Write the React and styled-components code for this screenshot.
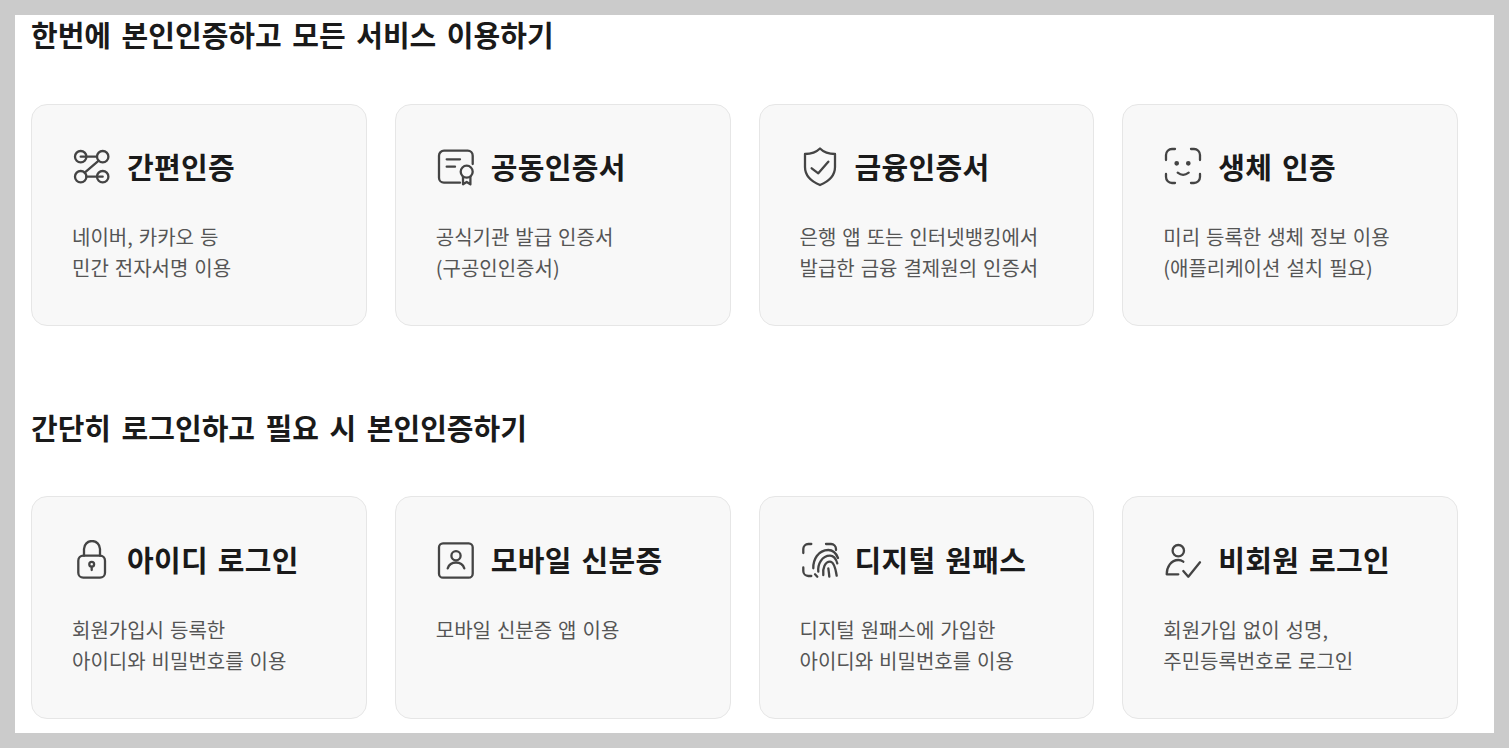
import React from 'react';
import styled, { createGlobalStyle } from 'styled-components';

const Global = createGlobalStyle`
  html, body { margin: 0; padding: 0; background: #cbcbcb; }
  body { font-family: "Noto Sans CJK KR", "Noto Sans", sans-serif; }
`

const Frame = styled.div`
  width: 1509px;
  height: 748px;
  box-sizing: border-box;
  padding: 15px;
`

const Panel = styled.main`
  height: 718px;
  box-sizing: border-box;
  background: #fff;
  padding: 0 36px 0 16px;
`

const Section = styled.section`
  & + & { margin-top: 81.9px; }
`

const Heading = styled.h2`
  margin: 0 0 46.6px;
  height: 42px;
  line-height: 38px;
  font-size: 29px;
  font-weight: 700;
  word-spacing: 4px;
  color: #1a1a1a;
`

const Cards = styled.div`
  display: grid;
  grid-template-columns: repeat(4, 1fr);
  column-gap: 28px;
`

const Card = styled.article`
  height: 222.3px;
  box-sizing: border-box;
  padding: 41.4px 40px 0;
  background: #f8f8f8;
  border: 1px solid #e6e6e6;
  border-radius: 16px;
`

const CardHead = styled.div`
  display: flex;
  align-items: center;
  gap: 15px;
  height: 42px;
`

const Icon = styled.svg`
  width: 40px;
  height: 40px;
  flex: none;
  fill: none;
  stroke: #444;
  stroke-width: 2.3;
  stroke-linecap: round;
  stroke-linejoin: round;
`

const CardTitle = styled.h3`
  margin: 0;
  padding-bottom: 2px;
  font-size: 29px;
  line-height: 40px;
  font-weight: 700;
  letter-spacing: 0.3px;
  word-spacing: 3px;
  color: #1a1a1a;
`

const Desc = styled.p`
  margin: 32.75px 0 0;
  font-size: 20px;
  line-height: 31.5px;
  word-spacing: 1.5px;
  color: #555;
  white-space: pre-line;
`

const icons = {
  flow: (
    <>
      <circle cx="8.7" cy="9.7" r="5.7" />
      <circle cx="30.7" cy="9.7" r="5.7" />
      <circle cx="8.7" cy="29.7" r="5.7" />
      <circle cx="30.7" cy="29.7" r="5.7" />
      <path d="M8.7 9.7H25M26.7 13.7L12.7 25.7M14.4 29.7H30.7" />
    </>
  ),
  cert: (
    <>
      <path d="M24 35.7H8a5 5 0 0 1-5-5V8.7a5 5 0 0 1 5-5h23.7a5 5 0 0 1 5 5V17" />
      <path d="M10.7 12.3H24M10.7 19.7H19" />
      <circle cx="30.7" cy="24.7" r="6" />
      <path d="M27 30v7.3l3.7-2.3 3.7 2.3V30" />
    </>
  ),
  shield: (
    <path d="M20 1.5C23.5 5 29 7 35 7V20C35 29 28.5 34.5 20 38C11.5 34.5 5 29 5 20V7C11 7 16.5 5 20 1.5ZM11.7 21.3L18.3 26.3L28.3 14.7" />
  ),
  face: (
    <>
      <path d="M3 13V8a6 6 0 0 1 6-6h3M28 2h3a6 6 0 0 1 6 6v5M3 27v3a6 6 0 0 0 6 6h3M37 27v3a6 6 0 0 1-6 6h-3" />
      <path d="M14.7 25.7Q20 30 25.7 25.7" />
      <circle cx="13.7" cy="16.3" r="1.2" fill="#444" />
      <circle cx="25.3" cy="16.3" r="1.2" fill="#444" />
    </>
  ),
  lock: (
    <>
      <rect x="6.3" y="15.7" width="26.7" height="22" rx="5" />
      <path d="M12 15.7V9a8 8 0 0 1 16 0v6.7" />
      <circle cx="19.7" cy="24.3" r="2.4" />
      <path d="M19.7 27V30" />
    </>
  ),
  idcard: (
    <>
      <rect x="3" y="3.3" width="33.7" height="34.4" rx="4" />
      <circle cx="20" cy="15.7" r="4.6" />
      <path d="M11.7 28.3C13 24.5 16 22.5 20 22.5S27 24.5 28.3 28.3" />
    </>
  ),
  fingerprint: (
    <>
      <path d="M3.3 13V9a5 5 0 0 1 5-5h3M3.3 27.5V31a5 5 0 0 0 5 5h3M26 4h5a5 5 0 0 1 5 5v1" />
      <path d="M13.3 28.3C13 20 18 10 28.3 10C32.5 10 36 13 38 18" />
      <path d="M15 34.3L17.3 36.7M18.3 31.7C17.5 24 22 15.7 30 15.7C33.5 15.7 36 19 37.3 23.3" />
      <path d="M23.3 35C22.5 28 25 21.7 30 21.7C33 21.7 35 25 36.7 35.7" />
      <path d="M29.3 36.7C29 33 28.7 31 28.3 28.3" />
    </>
  ),
  person: (
    <>
      <circle cx="15.3" cy="10.7" r="5.7" />
      <path d="M15.3 34.3H3.7C3.7 27 8 20 15.3 20C17 20 18.7 20.5 20.3 21.7" />
      <path d="M20.3 31L25.3 36.7L37 22.3" />
    </>
  ),
}

const sections = [
  {
    title: '한번에 본인인증하고 모든 서비스 이용하기',
    cards: [
      { icon: 'flow', name: '간편인증', desc: '네이버, 카카오 등\n민간 전자서명 이용' },
      { icon: 'cert', name: '공동인증서', desc: '공식기관 발급 인증서\n(구공인인증서)' },
      { icon: 'shield', name: '금융인증서', desc: '은행 앱 또는 인터넷뱅킹에서\n발급한 금융 결제원의 인증서' },
      { icon: 'face', name: '생체 인증', desc: '미리 등록한 생체 정보 이용\n(애플리케이션 설치 필요)' },
    ],
  },
  {
    title: '간단히 로그인하고 필요 시 본인인증하기',
    cards: [
      { icon: 'lock', name: '아이디 로그인', desc: '회원가입시 등록한\n아이디와 비밀번호를 이용' },
      { icon: 'idcard', name: '모바일 신분증', desc: '모바일 신분증 앱 이용' },
      { icon: 'fingerprint', name: '디지털 원패스', desc: '디지털 원패스에 가입한\n아이디와 비밀번호를 이용' },
      { icon: 'person', name: '비회원 로그인', desc: '회원가입 없이 성명,\n주민등록번호로 로그인' },
    ],
  },
]

const App = () => (
  <Frame>
    <Global />
    <Panel>
      {sections.map(section => (
        <Section key={section.title}>
          <Heading>{section.title}</Heading>
          <Cards>
            {section.cards.map(card => (
              <Card key={card.name}>
                <CardHead>
                  <Icon viewBox="0 0 40 40">{icons[card.icon]}</Icon>
                  <CardTitle>{card.name}</CardTitle>
                </CardHead>
                <Desc>{card.desc}</Desc>
              </Card>
            ))}
          </Cards>
        </Section>
      ))}
    </Panel>
  </Frame>
)

export default App;
